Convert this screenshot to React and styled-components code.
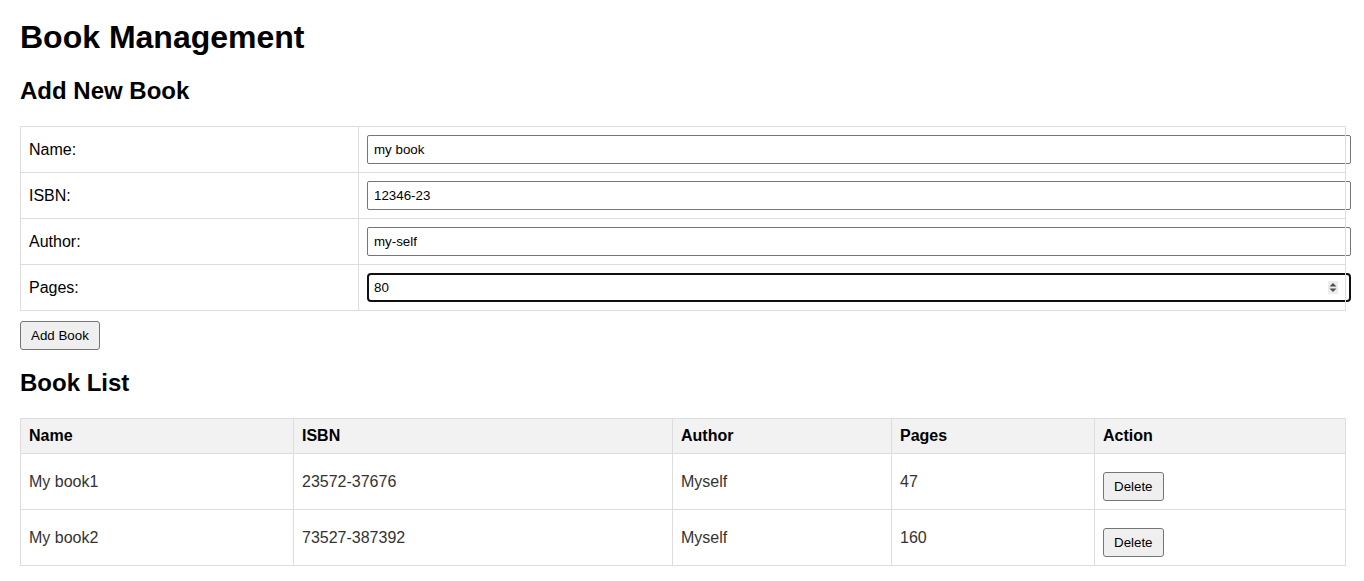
// Import React Libraries
import React, { useState } from 'react';

// Import Style
import styled, { createGlobalStyle } from 'styled-components';

const fontStack = `"Liberation Sans", Arial, Helvetica, sans-serif`;
const cellBorder = '1px solid #ddd';

const GlobalStyle = createGlobalStyle`
  html, body {
    margin: 0;
    padding: 0;
    background: #fff;
  }
  body {
    font-family: ${fontStack};
    font-size: 16px;
    color: #000;
  }
`;

const Page = styled.div`
  padding: 0 18px 0 20px;
  display: flow-root;
`;

const Title = styled.h1`
  font-size: 32px;
  font-weight: bold;
  margin: 19px 0 21px;
`;

const SectionTitle = styled.h2`
  font-size: 24px;
  font-weight: bold;
  margin: 19px 0 21px;
`;

const Table = styled.table`
  width: 100%;
  border-collapse: collapse;
  table-layout: fixed;
`;

const Col = styled.col`
  width: ${(props) => (props.$w ? `${props.$w}px` : 'auto')};
`;

const HeadCell = styled.th`
  background: #f2f2f2;
  border: ${cellBorder};
  padding: 8px;
  text-align: left;
  font-weight: bold;
  color: #000;
`;

const Cell = styled.td`
  border: ${cellBorder};
  padding: 8px;
  vertical-align: middle;
  color: ${(props) => (props.$label ? '#000' : '#333')};
`;

const TextInput = styled.input`
  box-sizing: border-box;
  display: block;
  width: calc(100% + 14px);
  padding: 6px;
  border: 1px solid #767676;
  border-radius: 2px;
  font-family: ${fontStack};
  font-size: 13.33px;
  line-height: 15px;
  color: #000;
  background: #fff;
  outline: none;
`;

const NumberField = styled.div`
  box-sizing: border-box;
  display: flex;
  align-items: center;
  width: calc(100% + 14px);
  padding: 5px 11px 5px 5px;
  border: 2px solid #101010;
  border-radius: 4px;
  background: #fff;
`;

const NumberInput = styled.input`
  flex: 1;
  min-width: 0;
  height: 15px;
  padding: 0;
  border: none;
  outline: none;
  background: transparent;
  font-family: ${fontStack};
  font-size: 13.33px;
  line-height: 15px;
  color: #000;
`;

const Button = styled.button`
  display: block;
  margin-top: ${(props) => (props.$top ? `${props.$top}px` : '0')};
  padding: 6px 10px;
  border: 1px solid #767676;
  border-radius: 3px;
  background: #efefef;
  font-family: ${fontStack};
  font-size: 13.33px;
  line-height: 15px;
  color: #000;
  cursor: pointer;
`;

function Spinner () {
  return (
    <svg width='10' height='13' viewBox='0 0 10 13'>
      <rect x='0' y='0' width='10' height='13' fill='#ececec'/>
      <path d='M1.5 5.5 L5 2 L8.5 5.5 Z' fill='#505050'/>
      <path d='M1.5 7.5 L5 11 L8.5 7.5 Z' fill='#505050'/>
    </svg>
  );
}

const books = [
  { name: 'My book1', isbn: '23572-37676', author: 'Myself', pages: 47 },
  { name: 'My book2', isbn: '73527-387392', author: 'Myself', pages: 160 }
];

function App () {
  const [form, setForm] = useState({ name: 'my book', isbn: '12346-23', author: 'my-self', pages: '80' });

  function handleChange (key) {
    return (e) => setForm({ ...form, [key]: e.target.value });
  }

  return (
    <Page>
      <GlobalStyle/>
      <Title>Book Management</Title>

      <SectionTitle>Add New Book</SectionTitle>
      <Table>
        <colgroup>
          <Col $w={338}/>
          <Col/>
        </colgroup>
        <tbody>
          <tr>
            <Cell $label>Name:</Cell>
            <Cell><TextInput value={form.name} onChange={handleChange('name')}/></Cell>
          </tr>
          <tr>
            <Cell $label>ISBN:</Cell>
            <Cell><TextInput value={form.isbn} onChange={handleChange('isbn')}/></Cell>
          </tr>
          <tr>
            <Cell $label>Author:</Cell>
            <Cell><TextInput value={form.author} onChange={handleChange('author')}/></Cell>
          </tr>
          <tr>
            <Cell $label>Pages:</Cell>
            <Cell>
              <NumberField>
                <NumberInput value={form.pages} onChange={handleChange('pages')}/>
                <Spinner/>
              </NumberField>
            </Cell>
          </tr>
        </tbody>
      </Table>
      <Button $top={10}>Add Book</Button>

      <SectionTitle>Book List</SectionTitle>
      <Table>
        <colgroup>
          <Col $w={273}/>
          <Col $w={379}/>
          <Col $w={219}/>
          <Col $w={203}/>
          <Col/>
        </colgroup>
        <thead>
          <tr>
            <HeadCell>Name</HeadCell>
            <HeadCell>ISBN</HeadCell>
            <HeadCell>Author</HeadCell>
            <HeadCell>Pages</HeadCell>
            <HeadCell>Action</HeadCell>
          </tr>
        </thead>
        <tbody>
          {books.map((book) => (
            <tr key={book.isbn}>
              <Cell>{book.name}</Cell>
              <Cell>{book.isbn}</Cell>
              <Cell>{book.author}</Cell>
              <Cell>{book.pages}</Cell>
              <Cell><Button $top={10}>Delete</Button></Cell>
            </tr>
          ))}
        </tbody>
      </Table>
    </Page>
  );
}

export default App;
